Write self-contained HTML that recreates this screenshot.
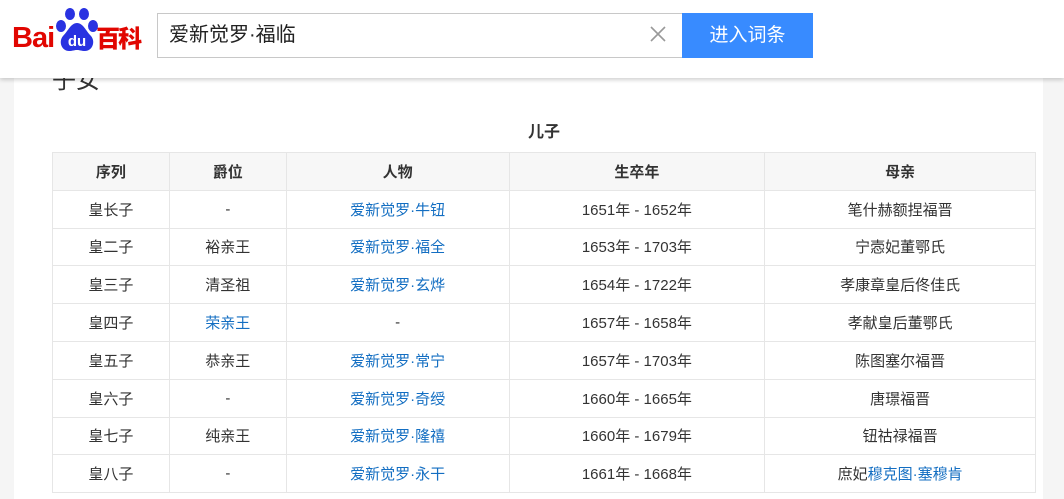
<!DOCTYPE html>
<html><head><meta charset="utf-8"><style>
*{margin:0;padding:0;box-sizing:border-box}
body{width:1064px;height:499px;overflow:hidden;background:#f5f5f5;font-family:"Liberation Sans","Noto Sans CJK SC",sans-serif;position:relative}
.main{position:absolute;left:14px;top:0;width:1029px;height:499px;background:#fff}
.h2{position:absolute;left:52px;top:64px;font-size:24px;color:#333;line-height:34px}
.cap{position:absolute;left:52px;width:984px;top:118px;text-align:center;font-weight:bold;font-size:16px;color:#333}
table{position:absolute;left:52px;top:152px;border-collapse:collapse;width:984px;font-size:15px;color:#333}
td,th{border:1px solid #e6e6e6;text-align:center;height:37.8px;padding:0}
th{background:#f7f7f7;font-weight:bold}
a{color:#136ec2;text-decoration:none}
.hdr{position:absolute;left:0;top:0;width:1064px;height:78px;background:#fff;box-shadow:0 2px 4px rgba(0,0,0,.18);z-index:2}
.box{position:absolute;left:157px;top:13px;width:526px;height:45px;border:1px solid #c8c8c8;font-size:20px;line-height:43px;padding-left:11px;color:#222}
.x{position:absolute;left:648px;top:24px}
.btn{position:absolute;left:682px;top:13px;width:131px;height:45px;background:#388bff;color:#fff;font-size:19px;line-height:45px;text-align:center}
.logo{position:absolute;left:12px;top:20px;font-weight:bold;color:#e10601;font-size:29px;line-height:36px;letter-spacing:-1px}
.logo b{font-size:24px;letter-spacing:-2px}
</style></head><body>
<div class="main">
</div>
<div class="h2">子女</div>
<div class="cap">儿子</div>
<table>
<colgroup><col style="width:117px"><col style="width:117px"><col style="width:223px"><col style="width:256px"><col style="width:271px"></colgroup>
<tr><th>序列</th><th>爵位</th><th>人物</th><th>生卒年</th><th>母亲</th></tr>
<tr><td>皇长子</td><td>-</td><td><a>爱新觉罗·牛钮</a></td><td>1651年 - 1652年</td><td>笔什赫额捏福晋</td></tr>
<tr><td>皇二子</td><td>裕亲王</td><td><a>爱新觉罗·福全</a></td><td>1653年 - 1703年</td><td>宁悫妃董鄂氏</td></tr>
<tr><td>皇三子</td><td>清圣祖</td><td><a>爱新觉罗·玄烨</a></td><td>1654年 - 1722年</td><td>孝康章皇后佟佳氏</td></tr>
<tr><td>皇四子</td><td><a>荣亲王</a></td><td>-</td><td>1657年 - 1658年</td><td>孝献皇后董鄂氏</td></tr>
<tr><td>皇五子</td><td>恭亲王</td><td><a>爱新觉罗·常宁</a></td><td>1657年 - 1703年</td><td>陈图塞尔福晋</td></tr>
<tr><td>皇六子</td><td>-</td><td><a>爱新觉罗·奇绶</a></td><td>1660年 - 1665年</td><td>唐璟福晋</td></tr>
<tr><td>皇七子</td><td>纯亲王</td><td><a>爱新觉罗·隆禧</a></td><td>1660年 - 1679年</td><td>钮祜禄福晋</td></tr>
<tr><td>皇八子</td><td>-</td><td><a>爱新觉罗·永干</a></td><td>1661年 - 1668年</td><td>庶妃<a>穆克图·塞穆肯</a></td></tr>
</table>
<div class="hdr">
<div class="logo">Bai<span style="display:inline-block;width:42px"></span><b>百科</b></div>
<svg style="position:absolute;left:55px;top:7px" width="44" height="46" viewBox="0 0 44 46">
<g fill="#2932e1"><ellipse cx="15" cy="7" rx="5" ry="6"/><ellipse cx="29" cy="7" rx="5" ry="6"/><ellipse cx="6" cy="19" rx="5" ry="6"/><ellipse cx="38" cy="19" rx="5" ry="6"/>
<path d="M22 16c-6 0-9 8-14 13-5 6-1 15 6 15 4 0 5-1 8-1s4 1 8 1c7 0 11-9 6-15-5-5-8-13-14-13z"/></g>
<text x="22" y="39" fill="#fff" font-size="15" font-weight="bold" text-anchor="middle" font-family="Liberation Sans">du</text></svg>
<div class="box">爱新觉罗·福临</div>
<svg class="x" width="20" height="20" viewBox="0 0 20 20"><path d="M3 3L17 17M17 3L3 17" stroke="#999" stroke-width="1.6"/></svg>
<div class="btn">进入词条</div>
</div>
</body></html>
